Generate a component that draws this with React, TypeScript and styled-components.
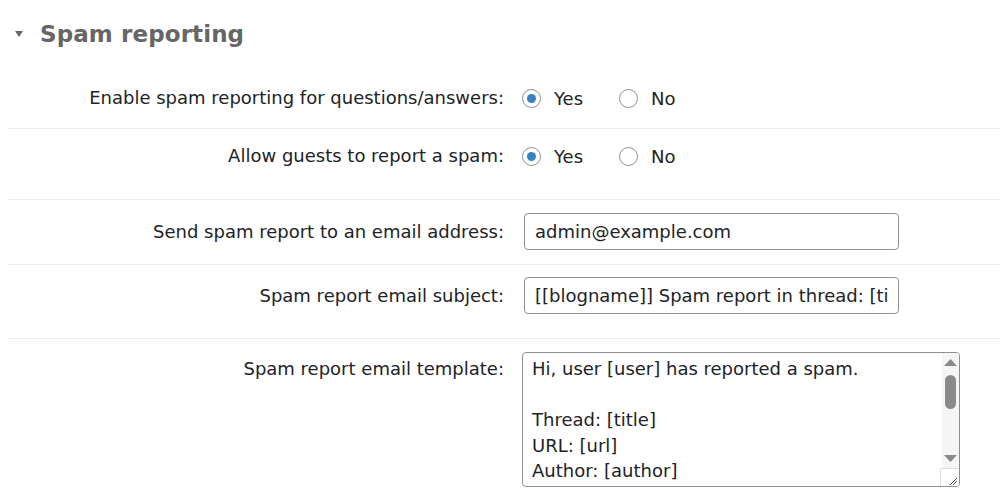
import React from 'react';
import styled, { createGlobalStyle } from 'styled-components';

const GlobalStyle = createGlobalStyle`
    body {
        margin: 0;
        background: #fff;
        font-family: "DejaVu Sans", Verdana, sans-serif;
        color: #1d2327;
    }
`

const template = `Hi, user [user] has reported a spam.

Thread: [title]
URL: [url]
Author: [author]
Content: [content]`

const ScrollBar = () => (
    <Scroll aria-hidden>
        <ScrollButton>
            <svg width='17' height='17' viewBox='0 0 17 17'>
                <polygon points='2,13 15,13 8.5,6' fill='#8a8a8a'/>
            </svg>
        </ScrollButton>
        <Track>
            <Thumb/>
        </Track>
        <ScrollButton>
            <svg width='17' height='17' viewBox='0 0 17 17'>
                <polygon points='2,4 15,4 8.5,11' fill='#8a8a8a'/>
            </svg>
        </ScrollButton>
        <Corner>
            <svg width='17' height='17' viewBox='0 0 17 17'>
                <line x1='9' y1='16' x2='16' y2='9' stroke='#555' strokeWidth='1'/>
                <line x1='12' y1='16' x2='16' y2='12' stroke='#555' strokeWidth='1'/>
            </svg>
        </Corner>
    </Scroll>
)

const App = () => {
    return (
        <>
            <GlobalStyle/>
            <Section>
                <Title>
                    <Caret/>
                    <h2>Spam reporting</h2>
                </Title>

                <Row $pad='18px 0 18px'>
                    <Label>Enable spam reporting for questions/answers:</Label>
                    <Options>
                        <Option>
                            <Radio type='radio' name='spam' defaultChecked/>
                            Yes
                        </Option>
                        <Option>
                            <Radio type='radio' name='spam'/>
                            No
                        </Option>
                    </Options>
                </Row>

                <Row $pad='15px 0 31px'>
                    <Label>Allow guests to report a spam:</Label>
                    <Options>
                        <Option>
                            <Radio type='radio' name='guests' defaultChecked/>
                            Yes
                        </Option>
                        <Option>
                            <Radio type='radio' name='guests'/>
                            No
                        </Option>
                    </Options>
                </Row>

                <Row $pad='13px 0 14px'>
                    <Label>Send spam report to an email address:</Label>
                    <TextInput type='text' defaultValue='admin@example.com'/>
                </Row>

                <Row $pad='12px 0 24px'>
                    <Label>Spam report email subject:</Label>
                    <TextInput type='text' defaultValue='[[blogname]] Spam report in thread: [title]'/>
                </Row>

                <Row $pad='13px 0 13px' $top>
                    <Label $offset='5px'>Spam report email template:</Label>
                    <TemplateBox>
                        <TextArea defaultValue={template}/>
                        <ScrollBar/>
                    </TemplateBox>
                </Row>
            </Section>
        </>
    );
};

export default App;

const Section = styled.section`
    padding-left: 8px;
    width: 992px;
`

const Title = styled.div`
    display: flex;
    align-items: center;
    height: 68px;
    padding-left: 7px;
    box-sizing: border-box;

    h2 {
        margin: 0 0 0 17px;
        font-size: 23px;
        font-weight: 700;
        color: #666;
        letter-spacing: 0.1px;
    }
`

const Caret = styled.span`
    width: 0;
    height: 0;
    border-left: 4px solid transparent;
    border-right: 4px solid transparent;
    border-top: 6px solid #666;
`

const Row = styled.div<{ $pad: string; $top?: boolean }>`
    display: grid;
    grid-template-columns: 496px 1fr;
    column-gap: 18px;
    align-items: ${p => p.$top ? 'start' : 'center'};
    padding: ${p => p.$pad};
    border-bottom: 1px solid #ececec;

    &:last-child {
        border-bottom: none;
    }
`

const Label = styled.div<{ $offset?: string }>`
    text-align: right;
    font-size: 18px;
    line-height: 24px;
    padding-top: ${p => p.$offset || '0'};
`

const Options = styled.div`
    display: flex;
    gap: 36px;
    height: 24px;
    align-items: center;
`

const Option = styled.label`
    display: flex;
    align-items: center;
    gap: 13px;
    font-size: 18px;
`

const Radio = styled.input`
    appearance: none;
    margin: 0;
    width: 19px;
    height: 19px;
    border: 1px solid #8c8f94;
    border-radius: 50%;
    background: #fff;
    display: grid;
    place-items: center;

    &:checked::before {
        content: '';
        width: 9px;
        height: 9px;
        border-radius: 50%;
        background: #3582c4;
    }
`

const TextInput = styled.input`
    box-sizing: border-box;
    margin-left: 2px;
    width: 375px;
    height: 37px;
    padding: 0 10px;
    border: 1px solid #8c8f94;
    border-radius: 4px;
    font-family: "DejaVu Sans", Verdana, sans-serif;
    font-size: 18px;
    color: #1d2327;
    outline: none;
`

const TemplateBox = styled.div`
    position: relative;
    width: 438px;
    height: 135px;
`

const TextArea = styled.textarea`
    display: block;
    box-sizing: border-box;
    width: 100%;
    height: 100%;
    padding: 3px 28px 3px 9px;
    border: 1px solid #8c8f94;
    border-radius: 4px;
    font-family: "DejaVu Sans", Verdana, sans-serif;
    font-size: 18px;
    line-height: 25.5px;
    color: #1d2327;
    outline: none;
    overflow: hidden;
    resize: none;
`

const Scroll = styled.div`
    position: absolute;
    top: 1px;
    right: 1px;
    bottom: 1px;
    width: 17px;
    display: flex;
    flex-direction: column;
    background: #f5f5f5;
    border-radius: 0 3px 3px 0;
    pointer-events: none;
`

const ScrollButton = styled.div`
    height: 17px;
    flex: none;

    svg {
        display: block;
    }
`

const Track = styled.div`
    flex: 1;
    padding: 5px 0 0 3px;
`

const Thumb = styled.div`
    width: 11px;
    height: 34px;
    border-radius: 6px;
    background: #8a8a8a;
`

const Corner = styled.div`
    height: 18px;
    flex: none;
    box-sizing: border-box;
    margin-left: -2px;
    width: 19px;
    background: #fff;
    border-left: 1px solid #dedede;
    border-top: 1px solid #dedede;
    border-bottom-right-radius: 3px;

    svg {
        display: block;
    }
`
